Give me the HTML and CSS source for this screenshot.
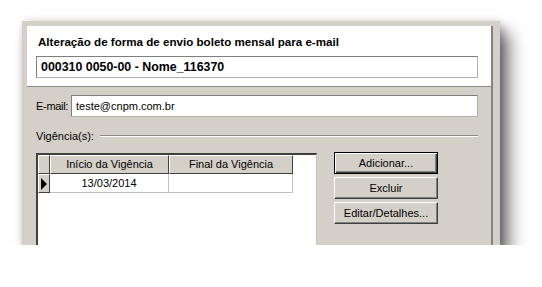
FILE: index.html
```html
<!DOCTYPE html>
<html lang="pt-BR">
<head>
  <meta charset="UTF-8">
  <title>Alteração de forma de envio</title>
  <link rel="stylesheet" href="styles.css">
</head>
<body>

<div class="window">
  <div class="frame">

    <!-- Cabeçalho branco -->
    <div class="header">
      <div class="title">Alteração de forma de envio boleto mensal para e-mail</div>
      <div class="field field-bold">000310 0050-00 - Nome_116370</div>
    </div>

    <div class="content">
      <div class="email-row">
        <label class="email-label">E-mail:</label>
        <div class="field">teste@cnpm.com.br</div>
      </div>

      <div class="group-title">
        <span>Vigência(s):</span>
        <div class="etched"></div>
      </div>

      <div class="grid-row">
        <div class="grid">
          <div class="grid-line">
            <div class="ind head"></div>
            <div class="cell head col1">Início da Vigência</div>
            <div class="cell head col2">Final da Vigência</div>
          </div>
          <div class="grid-line">
            <div class="ind"><span class="arrow"></span></div>
            <div class="cell col1">13/03/2014</div>
            <div class="cell col2"></div>
          </div>
        </div>

        <div class="buttons">
          <button class="btn btn-default">Adicionar...</button>
          <button class="btn">Excluir</button>
          <button class="btn">Editar/Detalhes...</button>
        </div>
      </div>
    </div>

  </div>
</div>

</body>
</html>
```

FILE: styles.css
```css
body {
  margin: 0;
  background-color: #ffffff;
  font-family: 'Liberation Sans', Arial, sans-serif;
  font-size: 11px;
  color: #000000;
}
.window {
  margin: 21px 0 0 22px;
  width: 478px;
  height: 224px;
  box-sizing: border-box;
  padding: 5px 7px 0 5px;
  background-color: #d4d0c8;
  display: flex;
  box-shadow: 10px 12px 16px rgba(0, 0, 0, 0.5), 3px 5px 8px rgba(0, 0, 0, 0.25), 0 -3px 6px rgba(0, 0, 0, 0.06);
}
.frame {
  flex: 1;
  display: flex;
  flex-direction: column;
  border-right: 2px solid #85837e;
  overflow: hidden;
}
.header {
  background-color: #ffffff;
  padding: 9px 13px 8px 9px;
  border-bottom: 1px solid #8c8a86;
}
.title {
  font-weight: bold;
  font-size: 11.6px;
  line-height: 14px;
  margin: 0 0 7px 2px;
}
.field {
  flex: 1;
  height: 22px;
  box-sizing: border-box;
  border: 1px solid #7f7f7f;
  border-right-color: #b0b0b0;
  border-bottom-color: #b0b0b0;
  background-color: #ffffff;
  padding: 0 4px;
  line-height: 20px;
}
.field-bold {
  font-weight: bold;
  font-size: 12.4px;
}
.content {
  padding: 8px 13px 0 9px;
}
.email-row {
  display: flex;
  align-items: center;
}
.email-label {
  width: 35px;
  letter-spacing: -0.3px;
}
.group-title {
  display: flex;
  align-items: center;
  margin-top: 12px;
  height: 14px;
}
.etched {
  flex: 1;
  margin-left: 6px;
  border-top: 1px solid #8c8a86;
  border-bottom: 1px solid #ffffff;
}
.grid-row {
  display: flex;
  margin-top: 10px;
}
.grid {
  width: 281px;
  height: 120px;
  box-sizing: border-box;
  background-color: #ffffff;
  border-top: 2px solid #404040;
  border-left: 2px solid #404040;
  border-right: 1px solid #c8c5bd;
}
.grid-line {
  display: flex;
  height: 19px;
}
.ind {
  width: 12px;
  box-sizing: border-box;
  background-color: #d4d0c8;
  border-right: 1px solid #404040;
  border-bottom: 1px solid #404040;
  border-top: 1px solid #ffffff;
  border-left: 1px solid #ffffff;
  position: relative;
}
.arrow {
  position: absolute;
  left: 2px;
  top: 3px;
  border-left: 6px solid #000000;
  border-top: 6px solid transparent;
  border-bottom: 6px solid transparent;
}
.cell {
  box-sizing: border-box;
  text-align: center;
  line-height: 18px;
  border-right: 1px solid #c0c0c0;
  border-bottom: 1px solid #c0c0c0;
}
.cell.head {
  background-color: #d4d0c8;
  border-top: 1px solid #ffffff;
  border-left: 1px solid #ffffff;
  border-right: 1px solid #404040;
  border-bottom: 1px solid #404040;
  line-height: 16px;
}
.col1 {
  width: 119px;
}
.col2 {
  width: 124px;
}
.buttons {
  display: flex;
  flex-direction: column;
  gap: 3px;
  margin-left: 17px;
  margin-top: -1px;
}
.btn {
  width: 104px;
  height: 22px;
  box-sizing: border-box;
  font-family: 'Liberation Sans', Arial, sans-serif;
  font-size: 11px;
  color: #000000;
  background-color: #d4d0c8;
  border: 1px solid;
  border-color: #ffffff #404040 #404040 #ffffff;
  box-shadow: inset -1px -1px 0 #808080;
  padding: 0;
}
.btn-default {
  border: 1px solid #000000;
  box-shadow: inset 1px 1px 0 #ffffff, inset -1px -1px 0 #404040, inset -2px -2px 0 #808080;
}
```
